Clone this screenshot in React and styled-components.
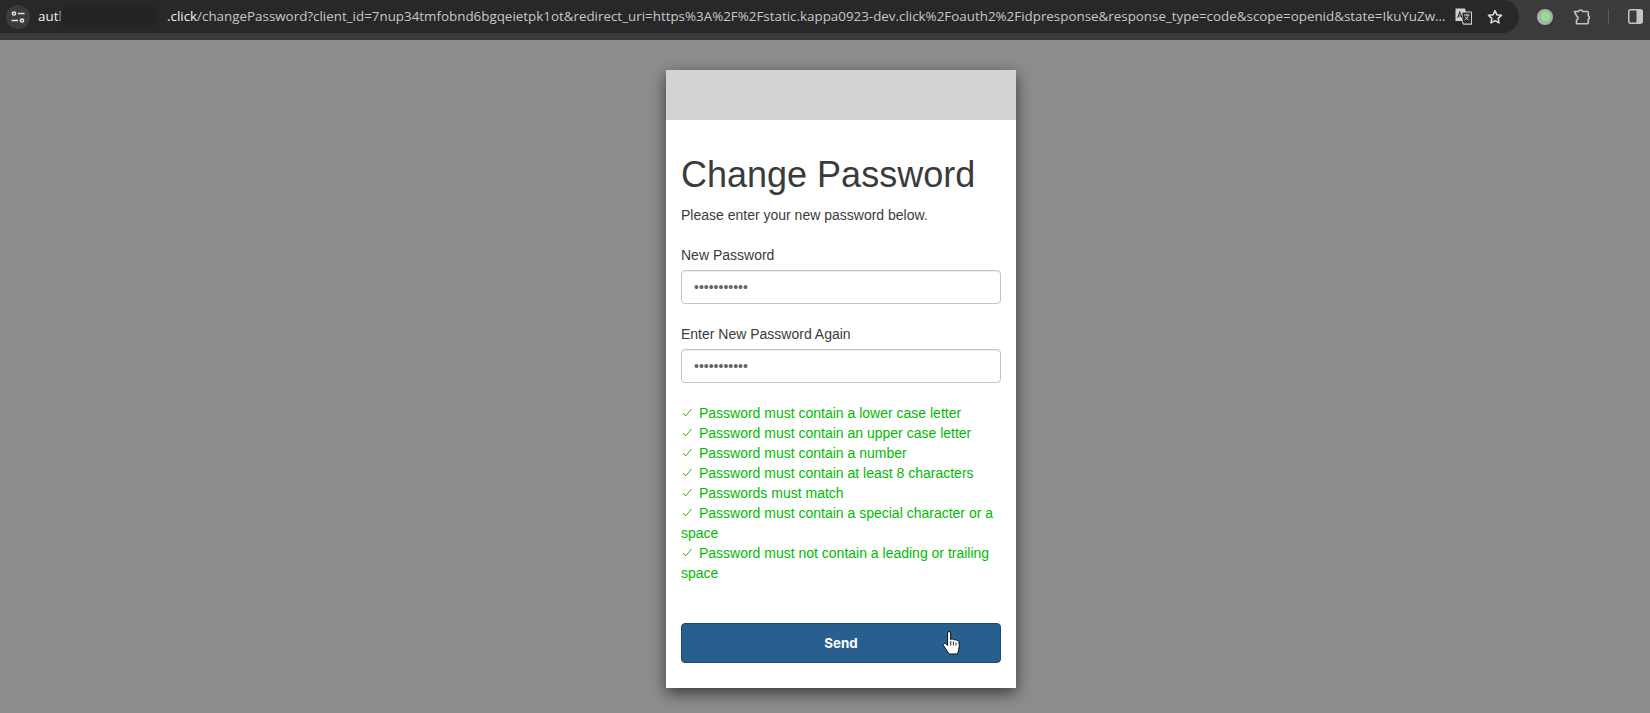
import React from "react";
import styled, { createGlobalStyle } from "styled-components";

const Global = createGlobalStyle`
  html, body { margin: 0; padding: 0; height: 100%; background: #8d8d8d; overflow: hidden; }
  * { box-sizing: border-box; }
`;
const Page = styled.div`
  width: 1650px; height: 713px; display: flex; flex-direction: column;
  font-family: "Liberation Sans", Arial, sans-serif; color: #3b3b3b; font-size: 14px; line-height: 20px;
`;
const Toolbar = styled.header`
  height: 40px; background: #3b3b3b; display: flex; align-items: flex-start; flex: none;
`;
const Omnibox = styled.div`
  position: relative; width: 1519px; height: 33px; background: #282828; border-radius: 0 17px 17px 0;
  display: flex; align-items: center; padding-left: 6px; flex: none;
`;
const SiteButton = styled.div`
  width: 24px; height: 24px; border-radius: 50%; background: #3c3c3c; display: flex;
  align-items: center; justify-content: center; flex: none; margin-right: 8px;
`;
const Url = styled.div`
  font-family: "Open Sans", sans-serif; font-size: 13.38px; line-height: 33px; color: #c7c7c7; white-space: nowrap; flex: none;
  width: 1409px; display: flex;
  b { font-weight: 400; color: #f1f1f1; }
`;
const Host = styled.span`color: #f1f1f1; width: 129px; flex: none;`;
const Redaction = styled.div`
  position: absolute; left: 60px; top: 7px; width: 98px; height: 19px; background: #232323;
  border-radius: 8px; filter: blur(1px);
`;
const OmniIcons = styled.div`
  display: flex; align-items: center; gap: 15px; margin-left: 8px; flex: none;
`;
const ToolIcons = styled.div`
  display: flex; align-items: center; height: 33px; margin-left: 18px;
`;
const Avatar = styled.div`
  width: 16px; height: 16px; border-radius: 50%; background: #a8b3a8; display: flex; align-items: center; justify-content: center;
  &::after { content: ""; width: 9px; height: 9px; border-radius: 50%; background: #8fe08f; }
`;
const Divider = styled.div`width: 1px; height: 15px; background: #5c5c5c; margin: 0 19px 0 18px;`;
const Stage = styled.main`flex: 1; display: flex; justify-content: center; align-items: flex-start; padding: 30px 0 0 32px;`;
const Card = styled.section`
  width: 350px; height: 618px; background: #fff; box-shadow: 0 5px 15px rgba(0,0,0,.6); position: relative;
`;
const Banner = styled.div`height: 50px; background: #d3d3d3;`;
const Body = styled.div`padding: 35px 15px 25px;`;
const Title = styled.h1`font-size: 36px; font-weight: 400; line-height: 40px; margin: 0 0 10px;`;
const Intro = styled.p`margin: 0 0 20px;`;
const Field = styled.div`margin-bottom: 20px;`;
const Label = styled.label`display: block; margin-bottom: 5px;`;
const PasswordInput = styled.input`
  display: block; width: 100%; height: 34px; padding: 6px 12px; font: 14px/20px "Liberation Sans", Arial, sans-serif; color: #666;
  background: #fff; border: 1px solid #c4c4c4; border-radius: 4px; outline: none; box-shadow: inset 0 1px 1px rgba(0,0,0,.075);
`;
const Rules = styled.div`margin-bottom: 40px; color: #00bb00;`;
const Rule = styled.div``;
const Check = styled.svg`width: 11px; height: 11px; margin: 0 3px 0 0; vertical-align: 0; overflow: visible;`;
const SendButton = styled.button`
  display: block; width: 100%; height: 40px; background: #285f8f; border: 1px solid #1f4a70; border-radius: 4px; color: #fff;
  font: 700 13.33px/20px Inter, "Liberation Sans", sans-serif; padding: 0; cursor: pointer;
`;
const Cursor = styled.svg`position: absolute; left: 277px; top: 561px; width: 17px; height: 24px;`;

const rules = [
  "Password must contain a lower case letter",
  "Password must contain an upper case letter",
  "Password must contain a number",
  "Password must contain at least 8 characters",
  "Passwords must match",
  "Password must contain a special character or a space",
  "Password must not contain a leading or trailing space",
];

export default function App() {
  return (
    <Page>
      <Global />
      <Toolbar>
        <Omnibox>
          <SiteButton>
            <svg width="16" height="16" viewBox="0 0 16 16" fill="none" stroke="#e3e3e3" strokeWidth="1.5">
              <circle cx="4" cy="4.5" r="1.6" /><path d="M8 4.5h6.5M1.5 11.5H8" /><circle cx="12" cy="11.5" r="1.6" />
            </svg>
          </SiteButton>
          <Url>
            <Host>auth</Host>
            <span><b>.click</b>/changePassword?client_id=7nup34tmfobnd6bgqeietpk1ot&amp;redirect_uri=https%3A%2F%2Fstatic.kappa0923-dev.click%2Foauth2%2Fidpresponse&amp;response_type=code&amp;scope=openid&amp;state=IkuYuZw...</span>
          </Url>
          <Redaction />
          <OmniIcons>
            <svg width="17" height="17" viewBox="0 0 17 17">
              <path d="M0.5 0.5h9.5l1 3.5h6v12.5H8l-1-3.5H0.5z" fill="#d2d2d2" />
              <path d="M7 4h9.5v12H8.5L7 13z" fill="#2c2c2c" stroke="#d2d2d2" />
              <path d="M9 7h5.5M11.7 6v1M13.3 7c-.5 2.5-2 4-3.7 5M10 8.5c.8 1.5 2 2.8 3.7 3.5" stroke="#d2d2d2" fill="none" strokeWidth="1" />
              <path d="M2.6 9.8 4.8 4l2.2 5.8M3.4 8h2.8" stroke="#333" fill="none" strokeWidth="1.1" />
            </svg>
            <svg width="16" height="16" viewBox="0 0 24 24" fill="none" stroke="#d8d8d8" strokeWidth="2.4" strokeLinejoin="round">
              <path d="M12 2.5l2.9 6.2 6.8.8-5 4.6 1.3 6.7L12 17.5l-6 3.3 1.3-6.7-5-4.6 6.8-.8z" />
            </svg>
          </OmniIcons>
        </Omnibox>
        <ToolIcons>
          <Avatar />
          <svg width="17" height="17" viewBox="0 0 17 17" style={{ marginLeft: 20 }} fill="none" stroke="#c4c4c4" strokeWidth="1.6" strokeLinejoin="round">
            <path d="M1.5 3.5h4a2.2 2.2 0 0 1 4.2 0h4.6a1 1 0 0 1 1 1v3.2a2.2 2.2 0 0 1 0 3.8v3.2a1 1 0 0 1-1 1H3.5v-3.6a2.2 2.2 0 0 0 0-4.2z" />
          </svg>
          <Divider />
          <svg width="15" height="15" viewBox="0 0 15 15">
            <rect x=".75" y=".75" width="13.5" height="13.5" rx="2" fill="none" stroke="#c4c4c4" strokeWidth="1.5" />
            <rect x="8.5" y="1" width="6" height="13" fill="#c4c4c4" />
          </svg>
        </ToolIcons>
      </Toolbar>
      <Stage>
        <Card>
          <Banner />
          <Body>
            <Title>Change Password</Title>
            <Intro>Please enter your new password below.</Intro>
            <Field>
              <Label>New Password</Label>
              <PasswordInput type="password" readOnly value="abcdefghijk" />
            </Field>
            <Field>
              <Label>Enter New Password Again</Label>
              <PasswordInput type="password" readOnly value="abcdefghijk" />
            </Field>
            <Rules>
              {rules.map((r) => (
                <Rule key={r}>
                  <Check viewBox="0 0 11 11" fill="none" stroke="#3cae1c" strokeWidth="1">
                    <path d="M2 6l2.6 3L10.5 2" />
                  </Check>{" "}{r}
                </Rule>
              ))}
            </Rules>
            <SendButton type="button">Send</SendButton>
          </Body>
          <Cursor viewBox="0 0 17 24">
            <path d="M4.6 2a1.5 1.5 0 0 1 3 0v6.4l1.4-.5 1.4.4.8.6 1.2-.2 1.2.6 1.1.1 1.2 1.3.4 4-.8 5-1 3.3H6.2l-2.2-3L.6 14.5c-.5-1.6 1.1-2.8 2.3-1.7l1.7 1.7z" fill="#fff" stroke="#111" strokeWidth="1" strokeLinejoin="round" />
            <path d="M7.8 10v4.5M10.4 10.5v4M13 11.5v3" stroke="#111" strokeWidth=".9" />
          </Cursor>
        </Card>
      </Stage>
    </Page>
  );
}
